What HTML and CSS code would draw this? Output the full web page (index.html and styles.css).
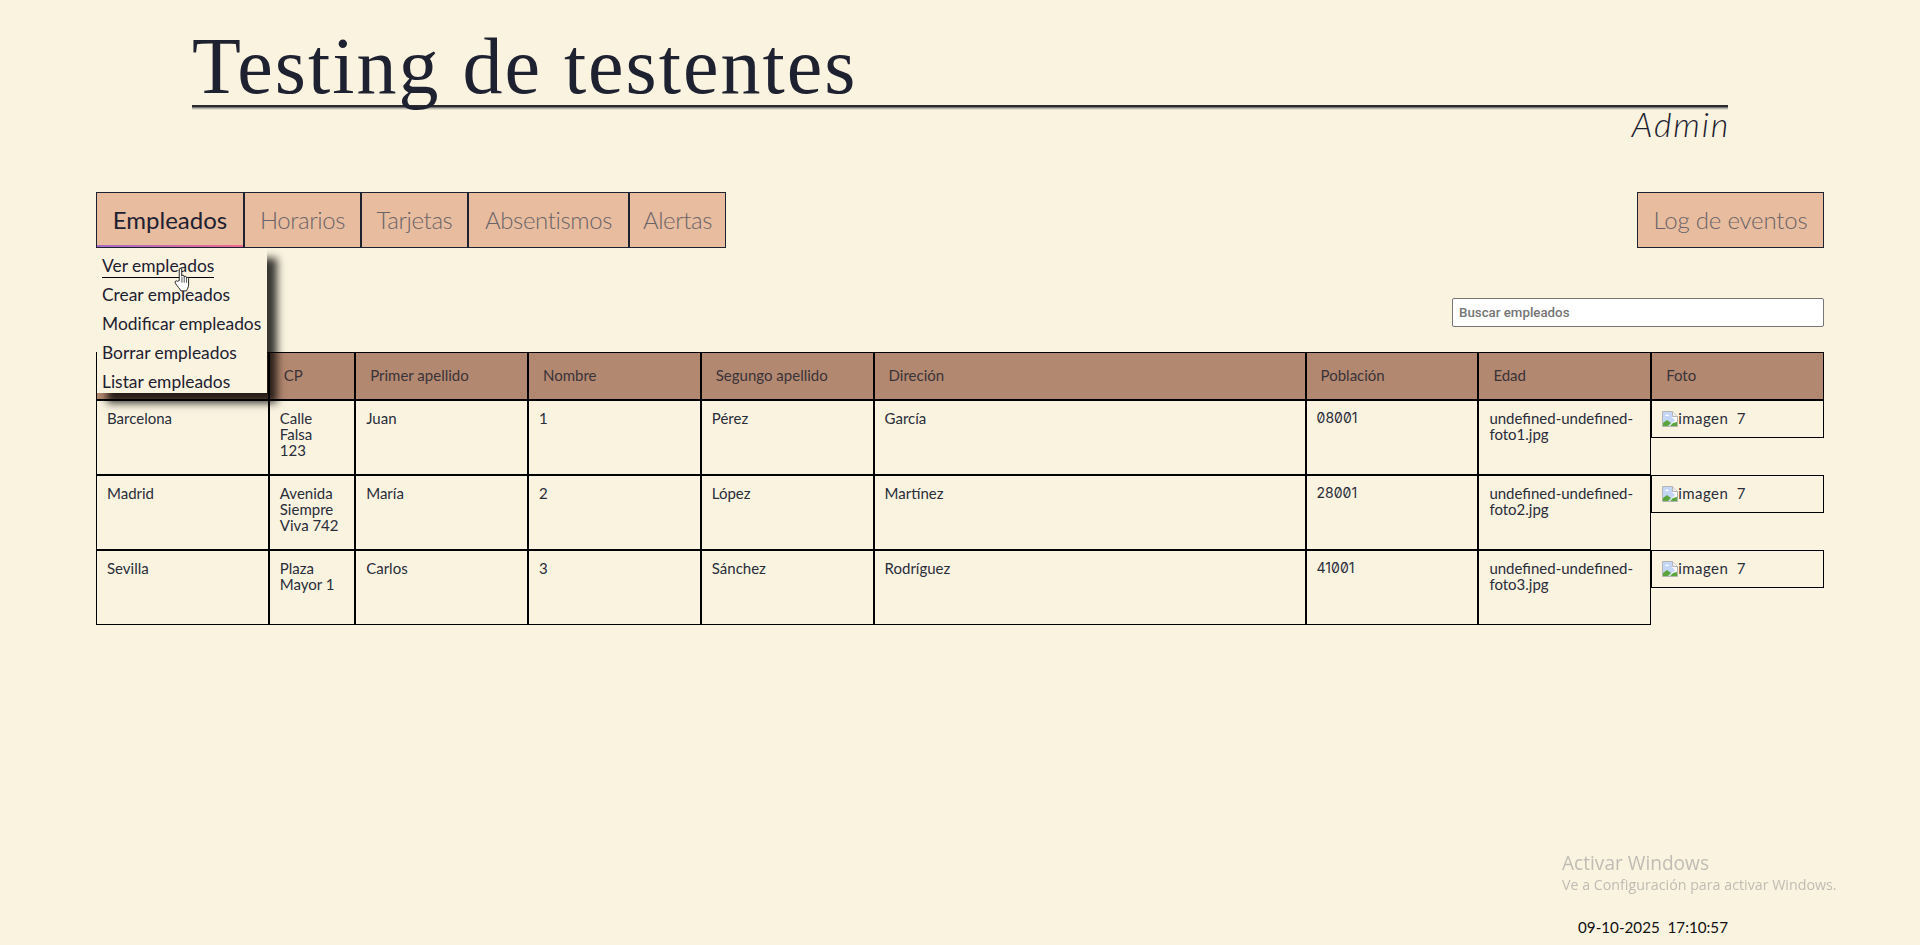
FILE: index.html
```html
<!DOCTYPE html>
<html lang="en">
<head>
    <meta charset="UTF-8">
    <meta name="viewport" content="width=device-width, initial-scale=1.0">
    <title>Testing de testentes</title>
    <link rel="stylesheet" href="styles.css">
</head>
<body>
    <header class="pageHeader">
        <h1>Testing de testentes</h1>
        <p class="role">Admin</p>
    </header>

    <nav class="navBar">
        <ul class="tabs">
            <li class="tab active">
                Empleados
                <ul class="dropdown">
                    <li><a href="#" class="hovered">Ver empleados</a></li>
                    <li><a href="#">Crear empleados</a></li>
                    <li><a href="#">Modificar empleados</a></li>
                    <li><a href="#">Borrar empleados</a></li>
                    <li><a href="#">Listar empleados</a></li>
                </ul>
                <svg class="cursor" width="19" height="24" viewBox="1 1.5 15 22">
                    <path d="M5.5 13V3.2c0-1.6 2.3-1.6 2.3 0V9c0-1.2 2.2-1.2 2.2 0v1c0-1.2 2.1-1.2 2.1 0v1c0-1.1 2-1.1 2 .2v5.6c0 2.5-1.4 4.2-2 5.7H7c-.8-1.8-3.2-4.2-5-7-1-1.6.7-3 2-1.8z" fill="#fff" stroke="#222" stroke-width=".9"/>
                    <path d="M8 10v5M10.1 10v5M12.2 11v4" stroke="#222" stroke-width=".7" fill="none"/>
                </svg>
            </li>
            <li class="tab tabHorarios">Horarios</li>
            <li class="tab tabTarjetas">Tarjetas</li>
            <li class="tab tabAbsentismos">Absentismos</li>
            <li class="tab tabAlertas">Alertas</li>
        </ul>
        <div class="tab logTab">Log de eventos</div>
    </nav>

    <div class="searchRow">
        <input type="text" class="search" placeholder="Buscar empleados">
    </div>

    <div class="grid">
        <div class="head">&nbsp;</div>
        <div class="head">CP</div>
        <div class="head">Primer apellido</div>
        <div class="head">Nombre</div>
        <div class="head">Segungo apellido</div>
        <div class="head">Direción</div>
        <div class="head">Población</div>
        <div class="head">Edad</div>
        <div class="head">Foto</div>

        <div class="cell">Barcelona</div>
        <div class="cell">Calle<br>Falsa<br>123</div>
        <div class="cell">Juan</div>
        <div class="cell">1</div>
        <div class="cell">Pérez</div>
        <div class="cell">García</div>
        <div class="cell zip">08001</div>
        <div class="cell">undefined-undefined-foto1.jpg</div>
        <div class="cell photo">
            <svg class="brokenImg" width="16" height="16" viewBox="0 0 16 16"><path d="M.5.5h10l5 5v10H.5z" fill="#fff" stroke="#b5b5b5"/><path d="M10.5.5v5h5" fill="#eee" stroke="#b5b5b5"/><path d="M1 1h9v5l3 3-6 6H1z" fill="#c4d6f5"/><path d="M1 15v-3l4-3 4 3-3 3z" fill="#5aa53c"/><path d="M8 15l3-3 4-1v4z" fill="#5aa53c"/><path d="M3 5c1-2 3-2 4 0z" fill="#fff"/></svg><span>imagen&nbsp; 7</span>
        </div>

        <div class="cell">Madrid</div>
        <div class="cell">Avenida Siempre Viva 742</div>
        <div class="cell">María</div>
        <div class="cell">2</div>
        <div class="cell">López</div>
        <div class="cell">Martínez</div>
        <div class="cell zip">28001</div>
        <div class="cell">undefined-undefined-foto2.jpg</div>
        <div class="cell photo">
            <svg class="brokenImg" width="16" height="16" viewBox="0 0 16 16"><path d="M.5.5h10l5 5v10H.5z" fill="#fff" stroke="#b5b5b5"/><path d="M10.5.5v5h5" fill="#eee" stroke="#b5b5b5"/><path d="M1 1h9v5l3 3-6 6H1z" fill="#c4d6f5"/><path d="M1 15v-3l4-3 4 3-3 3z" fill="#5aa53c"/><path d="M8 15l3-3 4-1v4z" fill="#5aa53c"/><path d="M3 5c1-2 3-2 4 0z" fill="#fff"/></svg><span>imagen&nbsp; 7</span>
        </div>

        <div class="cell">Sevilla</div>
        <div class="cell">Plaza Mayor 1</div>
        <div class="cell">Carlos</div>
        <div class="cell">3</div>
        <div class="cell">Sánchez</div>
        <div class="cell">Rodríguez</div>
        <div class="cell zip">41001</div>
        <div class="cell">undefined-undefined-foto3.jpg</div>
        <div class="cell photo">
            <svg class="brokenImg" width="16" height="16" viewBox="0 0 16 16"><path d="M.5.5h10l5 5v10H.5z" fill="#fff" stroke="#b5b5b5"/><path d="M10.5.5v5h5" fill="#eee" stroke="#b5b5b5"/><path d="M1 1h9v5l3 3-6 6H1z" fill="#c4d6f5"/><path d="M1 15v-3l4-3 4 3-3 3z" fill="#5aa53c"/><path d="M8 15l3-3 4-1v4z" fill="#5aa53c"/><path d="M3 5c1-2 3-2 4 0z" fill="#fff"/></svg><span>imagen&nbsp; 7</span>
        </div>
    </div>

    <footer class="clock">09-10-2025&nbsp; 17:10:57</footer>

    <div class="watermark">
        <div class="wmTitle">Activar Windows</div>
        <div class="wmText">Ve a Configuración para activar Windows.</div>
    </div>
</body>
</html>
```

FILE: styles.css
```css
* {
    box-sizing: border-box;
}
html, body {
    height: 100%;
}
body {
    margin: 0;
    background-color: #FAF3E0;
    color: #1E2130;
    font-family: Lato, sans-serif;
    display: flex;
    flex-direction: column;
    overflow: hidden;
}

/* title */
.pageHeader {
    width: 80%;
    margin: 0 auto;
    flex: none;
}
h1 {
    margin: 0;
    height: 110px;
    padding-top: 20px;
    font-family: "Liberation Serif", serif;
    font-weight: 400;
    font-size: 80px;
    line-height: 92px;
    letter-spacing: 2px;
    background: linear-gradient(#2b2b2f 0 2px, #77777a 2px 3px, #bdb9ae 3px 4px, #e2dccb 4px 5px) bottom / 100% 5px no-repeat;
}
.role {
    margin: 0 -2px 0 0;
    height: 82px;
    text-align: right;
    font-size: 34px;
    line-height: 28px;
    letter-spacing: 1.8px;
    font-style: italic;
    font-weight: 300;
}

/* tabs */
.navBar {
    width: 90%;
    margin: 0 auto;
    flex: none;
    display: flex;
    justify-content: space-between;
    height: 56px;
}
.tabs {
    display: flex;
    margin: 0;
    padding: 0;
    list-style-type: none;
}
.tab {
    position: relative;
    height: 56px;
    padding: 0 0 2px;
    display: flex;
    align-items: center;
    justify-content: center;
    background-color: #E8BC9F;
    border: 1px solid #1E2130;
    font-size: 24px;
    letter-spacing: -.4px;
    font-weight: 300;
    color: #6a6468;
    white-space: nowrap;
}
.tab + .tab {
    margin-left: -1px;
    border-left-width: 2px;
}
.tabHorarios {
    width: 118px;
}
.tabTarjetas {
    width: 108px;
}
.tabAbsentismos {
    width: 162px;
}
.tabAlertas {
    width: 98px;
}
.logTab {
    width: 187px;
    letter-spacing: -.2px;
}
.tab.active {
    width: 148px;
    color: #1E2130;
    font-weight: 400;
    letter-spacing: 0;
}
.tab.active::after {
    content: "";
    position: absolute;
    left: 0;
    right: 0;
    bottom: 0;
    height: 2px;
    background: linear-gradient(to right, #A56CC6, #F0688F);
}

/* dropdown */
.dropdown {
    position: absolute;
    z-index: 2;
    left: 0;
    top: 55px;
    width: 170px;
    height: 145px;
    margin: 0;
    padding: 6px 0 0 5px;
    list-style-type: none;
    background-color: #FAF3E0;
    box-shadow: 10px 10px 8px rgba(0, 0, 0, .78);
    font-size: 17.4px;
    font-weight: 400;
    overflow: hidden;
}
.dropdown li {
    height: 29px;
    line-height: 24px;
}
.dropdown a {
    display: inline-block;
    height: 24px;
    color: #1E2130;
    text-decoration: none;
}
.dropdown a.hovered {
    border-bottom: 1px solid #000;
}
.cursor {
    position: absolute;
    z-index: 3;
    left: 76px;
    top: 75px;
}

/* search */
.searchRow {
    width: 90%;
    margin: 50px auto 25px;
    flex: none;
    display: flex;
    justify-content: flex-end;
}
.search {
    width: 372px;
    height: 29px;
    padding: 0 6px;
    border: 1px solid #767676;
    border-radius: 2px;
    background-color: #fff;
    font-family: Roboto, sans-serif;
    font-size: 13.3px;
    font-weight: 500;
}
.search::placeholder {
    color: #757575;
    opacity: 1;
}

/* table */
.grid {
    width: 90%;
    margin: 0 auto;
    flex: none;
    display: grid;
    grid-template-columns: 10% 5% 10% 10% 10% 25% 10% 10% 10%;
    grid-template-rows: 48px repeat(3, 75px);
    font-size: 15px;
    line-height: 16px;
    color: #2a2d3a;
}
.head {
    background-color: #B38870;
    border: 1px solid #000;
    padding: 14px;
    color: #3a3338;
}
.cell {
    border: 1px solid #000;
    padding: 9px 10px 10px;
}
.zip {
    font-family: Inter, sans-serif;
    font-feature-settings: "zero";
    font-size: 14px;
}
.photo {
    align-self: start;
    height: 38px;
    display: flex;
    align-items: flex-start;
    white-space: pre;
    letter-spacing: .45px;
}
.brokenImg {
    margin-top: 1px;
}

/* bottom */
.clock {
    width: 80%;
    margin: auto auto 8px;
    flex: none;
    text-align: right;
    font-size: 15.2px;
    line-height: 20px;
    color: #111;
}
.watermark {
    position: fixed;
    left: 1562px;
    top: 850px;
    font-family: "Open Sans", sans-serif;
    color: #BFBCB4;
}
.wmTitle {
    font-size: 19.1px;
    line-height: 26px;
}
.wmText {
    font-size: 14.25px;
    line-height: 18px;
}
```
